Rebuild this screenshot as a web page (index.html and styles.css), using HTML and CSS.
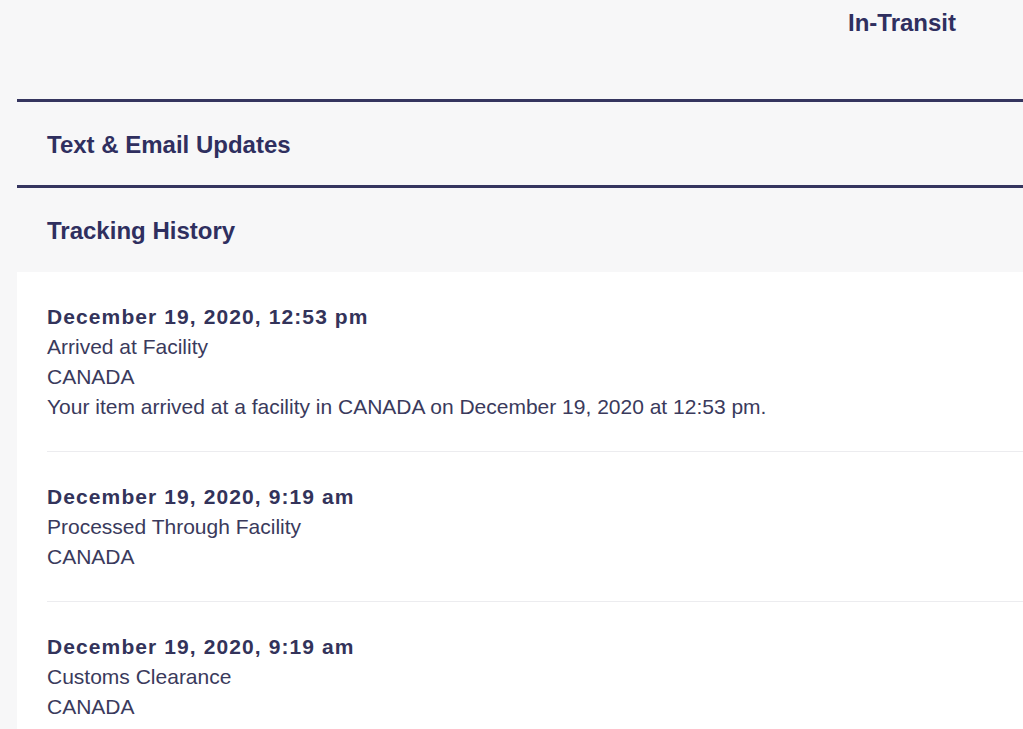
FILE: index.html
```html
<!DOCTYPE html>
<html lang="en">
<head>
    <meta charset="UTF-8">
    <meta name="viewport" content="width=device-width, initial-scale=1.0">
    <title>Tracking History</title>
    <link rel="stylesheet" href="styles.css">
</head>
<body>

<div id="seguimiento">
    <div class="estado">
        <span>In-Transit</span>
    </div>
    <div class="seccion con-borde">
        <h2>Text &amp; Email Updates</h2>
    </div>
    <div class="seccion con-borde">
        <h2>Tracking History</h2>
    </div>
    <div id="historial">
        <div class="evento">
            <p class="fecha">December 19, 2020, 12:53 pm</p>
            <p>Arrived at Facility</p>
            <p>CANADA</p>
            <p>Your item arrived at a facility in CANADA on December 19, 2020 at 12:53 pm.</p>
        </div>
        <div class="evento">
            <p class="fecha">December 19, 2020, 9:19 am</p>
            <p>Processed Through Facility</p>
            <p>CANADA</p>
        </div>
        <div class="evento">
            <p class="fecha">December 19, 2020, 9:19 am</p>
            <p>Customs Clearance</p>
            <p>CANADA</p>
        </div>
    </div>
</div>

</body>
</html>
```

FILE: styles.css
```css
body {
    font-family: "Liberation Sans", Arial, sans-serif;
    margin: 0;
    background-color: #f7f7f8;
    color: #3a3a5c;
}
#seguimiento {
    margin-left: 17px;
}
.estado {
    display: flex;
    justify-content: flex-end;
    height: 99px;
    padding-right: 67px;
    box-sizing: border-box;
    padding-top: 9px;
}
.estado span {
    font-size: 24px;
    font-weight: bold;
    color: #2f2f5f;
}
.seccion {
    display: flex;
    align-items: center;
    height: 83px;
    padding-left: 30px;
}
.con-borde {
    border-top: 3px solid #35355f;
}
.seccion h2 {
    margin: 3px 0 0;
    font-size: 24px;
    color: #2f2f5f;
}
#historial {
    margin-top: 1px;
    background: #ffffff;
}
.evento {
    margin-left: 30px;
    padding: 30px 0 29px;
    border-bottom: 1px solid #ececef;
}
.evento p {
    margin: 0;
    font-size: 21px;
    line-height: 30px;
}
.evento .fecha {
    font-weight: bold;
    letter-spacing: 1.1px;
    color: #33335a;
}
```
